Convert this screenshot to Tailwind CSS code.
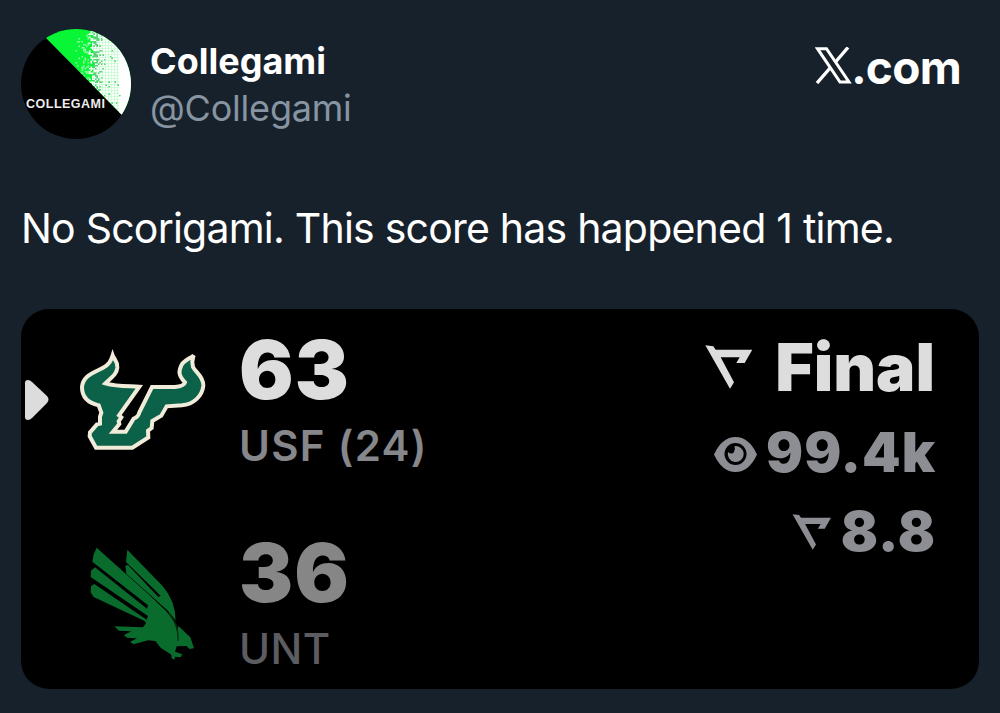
<!DOCTYPE html>
<html lang="en">
<head>
  <meta charset="UTF-8" />
  <meta name="viewport" content="width=device-width, initial-scale=1.0"/>
  <title>Collegami on X</title>
  <script src="https://cdn.jsdelivr.net/npm/@tailwindcss/browser@4"></script>
</head>
<body class="bg-[#17212b] font-['Inter',sans-serif] text-white">
  <main class="w-[1000px] h-[713px] overflow-hidden px-[21px] pt-[29px] whitespace-nowrap">

    <!-- Header -->
    <header class="flex justify-between items-start h-[110px]">
      <div class="flex gap-[19px]">
        <svg class="w-[110px] h-[110px]" viewBox="0 0 110 110">
          <defs>
            <clipPath id="avatarClip"><circle cx="55" cy="55" r="55"/></clipPath>
            <clipPath id="sliceClip"><path d="M15 0H110V94L101 86 25 9Z"/></clipPath>
          </defs>
          <g clip-path="url(#avatarClip)">
            <rect width="110" height="110" fill="#000"/>
            <g clip-path="url(#sliceClip)">
              <rect width="110" height="110" fill="#08f636"/>
              <g id="speckles"></g>
            </g>
            <text x="5" y="79" textLength="79" lengthAdjust="spacing" font-family="Liberation Sans, sans-serif" font-weight="700" font-size="12.5" fill="#eee">COLLEGAMI</text>
          </g>
        </svg>
        <div class="pt-[14px] text-[36px] leading-none">
          <h1 class="font-bold">Collegami</h1>
          <p class="mt-[11px] text-[#8795a2] tracking-[-0.2px]">@Collegami</p>
        </div>
      </div>
      <div class="flex items-start pt-[15px] pr-[18px]">
        <svg class="w-[37px] h-[37px] mt-[3px]" viewBox="0 0 37 37" fill="none" stroke="#fff">
          <path d="M2.500 1.700H11.500L34 35H25Z" stroke-width="3"/>
          <path d="M33 0.500L20.500 15M15.500 20.500L2 36" stroke-width="3.400"/>
        </svg>
        <span class="text-[46px] leading-none font-bold tracking-[-0.7px] -ml-[1px]">.com</span>
      </div>
    </header>

    <!-- Tweet text -->
    <p class="mt-[69px] text-[41px] leading-none tracking-[-0.78px]">No Scorigami. This score has happened 1 time.</p>

    <!-- Score card -->
    <section class="mt-[60px] w-[958px] h-[380px] rounded-[28px] bg-black flex justify-between pt-[21px] pr-[44px]">
      <div class="flex flex-col gap-[67px]">
        <div class="flex h-[136px]">
          <svg class="w-[24px] h-[40px] ml-[4px] mt-[50px]" viewBox="0 0 24 40">
            <path d="M0 3Q0 0 3 0Q5 0 7 2L22 16Q25 19.500 22 23L7 38Q5 40 3 40Q0 40 0 37Z" fill="#dcdcdc"/>
          </svg>
          <svg class="w-[130px] h-[104px] ml-[29px] mt-[19px] mr-[31px]" viewBox="190 145 390 312">
            <path d="M294 164C298 175 309 181 308 201C306 222 290 230 272 248C305 258 340 256 374 258L313 344L320 350 312 362 314 370 295 393H333L357 354Q371 349 374 335L412 259H481C500 257 509 254 511 245C490 224 492 211 500 194C508 178 528 173 537 164C534 174 530 180 535 199C541 213 567 227 566 255C563 287 536 311 502 314L456 317 440 345 413 361 411 382 400 390 401 410 353 441H244L225 407 226 395 247 371 256 369V348L260 336 252 314C220 307 202 291 202 260C204 225 236 217 264 202C284 191 289 180 294 164Z" fill="#0c6149" stroke="#f1ecd9" stroke-width="12" stroke-linejoin="miter"/>
          </svg>
          <div class="leading-none">
            <div class="text-[81px] font-black text-[#dddddd] tracking-[1px]">63</div>
            <div class="mt-[14px] text-[42px] font-semibold text-[#86878b] tracking-[1.3px]">USF (24)</div>
          </div>
        </div>
        <div class="flex h-[136px]">
          <svg class="w-[110px] h-[118px] ml-[67px] mt-[12px] mr-[41px]" viewBox="40 45 330 354" fill="#0a6c2c">
            <path d="M66 53L220 191 275 244Q303 275 307 303L311 288 347 322 358 355 345 357 335 348 306 349 301 365 323 373 318 382 301 380 299 389 291 385 290 374 258 353 242 333 220 331 177 343 166 336 187 325 157 323 148 315 170 304 133 302 119 289 205 292 214 280 210 273 57 201 48 187 49 169 59 162 216 269 220 258 48 141 49 122 61 112 217 236 220 226 53 95 57 73Z"/>
            <path d="M158 59L263 167Q302 211 303 271L278 241 155 131 152 107 160 105 251 201 258 197 154 96Z"/>
            <path d="M282 250Q313 282 310 332" fill="none" stroke="#032c12" stroke-width="4"/>
          </svg>
          <div class="leading-none">
            <div class="text-[81px] font-black text-[#868686] tracking-[1px]">36</div>
            <div class="mt-[14px] text-[42px] font-medium text-[#5c5d60] tracking-[0.5px]">UNT</div>
          </div>
        </div>
      </div>

      <!-- Game status -->
      <div class="flex flex-col items-end leading-none">
        <div class="flex mt-[4px] text-[66px] font-black text-[#dddddd]">
          <svg class="w-[47px] h-[44px] mt-[11px] mr-[23px]" viewBox="45 44 141 132" fill="currentColor">
            <path d="M46 45L70 48 77 58H187L164 98H139L149 81H92L132 156 120 175Z"/>
          </svg>
          <span>Final</span>
        </div>
        <div class="flex mt-[25px] text-[55px] font-black text-[#8d8e93]">
          <svg class="w-[43px] h-[35px] mt-[12px] mr-[9px]" viewBox="0 0 43 35">
            <path d="M0 17.500Q8 0 21.500 0T43 17.500Q35 35 21.500 35T0 17.500Z" fill="currentColor"/>
            <circle cx="21.500" cy="17" r="11" fill="#000"/>
            <path d="M20.500 9.200A8 8 0 1 1 14 15Q18 18 20 15Q21.500 12 20.500 9.200Z" fill="currentColor"/>
          </svg>
          <span class="tracking-[1px] -mr-[1px]">99.4k</span>
        </div>
        <div class="flex mt-[24px] text-[55px] font-black text-[#8d8e93]">
          <svg class="w-[39px] h-[36px] mt-[10px] mr-[10px]" viewBox="45 44 141 132" fill="currentColor">
            <path d="M46 45L70 48 77 58H187L164 98H139L149 81H92L132 156 120 175Z"/>
          </svg>
          <span class="tracking-[1px] -mr-[1px]">8.8</span>
        </div>
      </div>
    </section>
  </main>

  <script>
    // Grain on the avatar: solid green fades into white, cell by cell
    const speckles = document.getElementById('speckles');
    let seed = 7;
    const rand = () => (seed = (seed * 16807) % 2147483647) / 2147483647;
    let cells = '<rect x="98" width="12" height="110" fill="#fff"/>';
    for (let y = 0; y < 96; y += 1.5) {
      for (let x = 53; x < 99; x += 1.5) {
        const chance = x < 66 ? (x - 53) / 45 : Math.min(0.97, 0.3 + (x - 66) / 26);
        const white = rand() < chance;
        if (!white && x < 72) continue;
        const fill = white ? (x < 68 ? '#8dfba0' : '#fff') : '#5fce7c';
        cells += `<rect x="${x}" y="${y}" width="1.6" height="1.6" fill="${fill}"/>`;
      }
    }
    speckles.innerHTML = cells;
  </script>
</body>
</html>
